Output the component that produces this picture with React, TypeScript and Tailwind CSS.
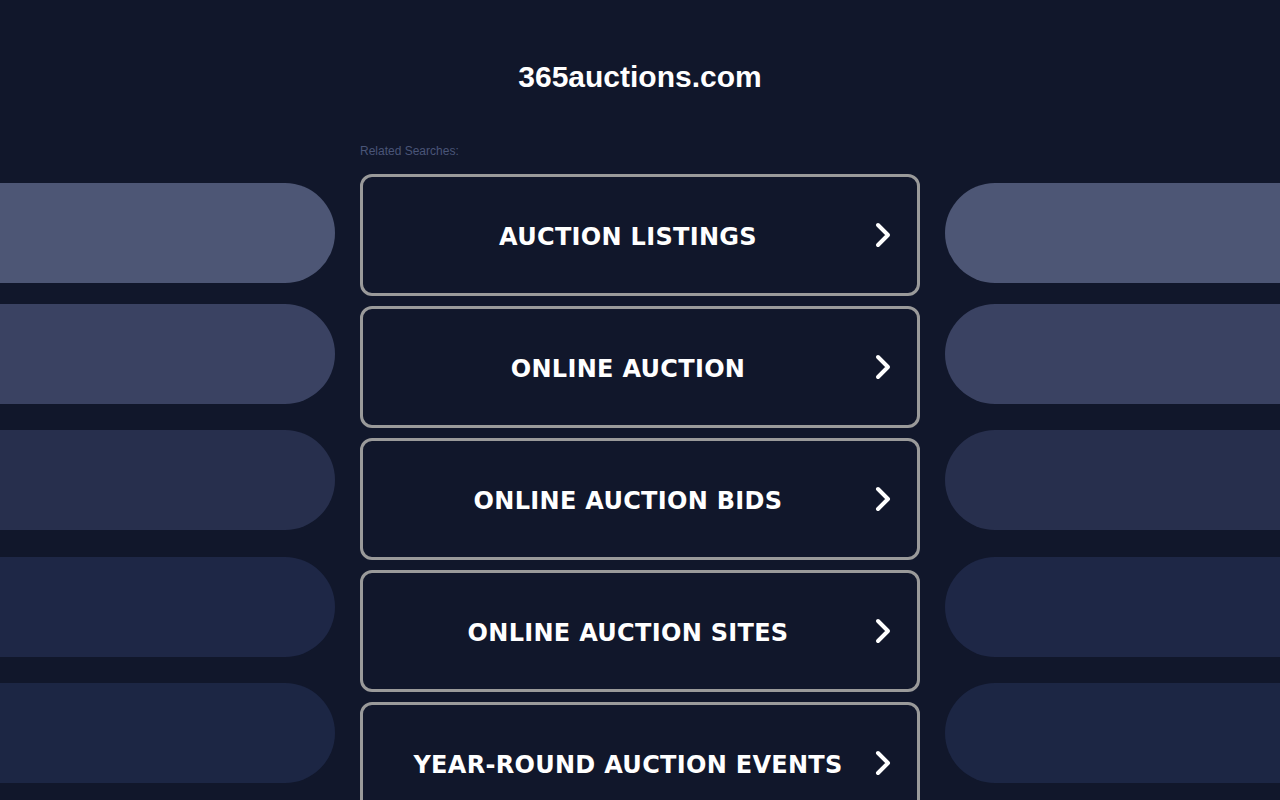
const links = [
  "AUCTION LISTINGS",
  "ONLINE AUCTION",
  "ONLINE AUCTION BIDS",
  "ONLINE AUCTION SITES",
  "YEAR-ROUND AUCTION EVENTS",
];

const pills = [
  { color: "bg-[#4d5675]", mt: "mt-[183px]" },
  { color: "bg-[#3a4262]", mt: "mt-[21px]" },
  { color: "bg-[#272f4d]", mt: "mt-[26px]" },
  { color: "bg-[#1e2746]", mt: "mt-[27px]" },
  { color: "bg-[#1c2644]", mt: "mt-[26px]" },
];

function Chevron() {
  return (
    <svg width="16" height="26" viewBox="0 0 16 26" className="shrink-0">
      <path d="M3 3 L13 13 L3 23" fill="none" stroke="#ffffff" strokeWidth="4" strokeLinecap="round" strokeLinejoin="round" />
    </svg>
  );
}

export default function App() {
  return (
    <div className="w-full h-[800px] overflow-hidden bg-[#11172b] flex gap-[25px]">
      {/* left pills */}
      <div className="w-[335px] shrink-0 flex flex-col">
        {pills.map((p, i) => (
          <div key={i} className={`${p.mt} h-[100px] w-full rounded-r-full ${p.color}`} />
        ))}
      </div>

      {/* center column */}
      <div className="w-[560px] shrink-0 flex flex-col">
        <h1 className="mt-[58px] text-center text-white font-bold text-[30px] leading-[38px] font-['Liberation_Sans',Arial,sans-serif]">
          365auctions.com
        </h1>
        <div className="mt-[48px] text-[12px] leading-[14px] text-[#4a5578] font-['Liberation_Sans',Arial,sans-serif]">
          Related Searches:
        </div>
        <div className="mt-[16px] flex flex-col gap-[10px]">
          {links.map((t) => (
            <a
              key={t}
              href="#"
              className="h-[122px] shrink-0 flex items-center border-[3px] border-[#9a9a9a] rounded-[12px] pl-[18px] pr-[26px] bg-[#11172b]"
            >
              <span className="flex-1 pt-[4px] text-center text-white font-bold text-[24px] tracking-[0.3px] font-['DejaVu_Sans',Verdana,sans-serif]">
                {t}
              </span>
              <Chevron />
            </a>
          ))}
        </div>
      </div>

      {/* right pills */}
      <div className="flex-1 flex flex-col">
        {pills.map((p, i) => (
          <div key={i} className={`${p.mt} h-[100px] w-full rounded-l-full ${p.color}`} />
        ))}
      </div>
    </div>
  );
}
